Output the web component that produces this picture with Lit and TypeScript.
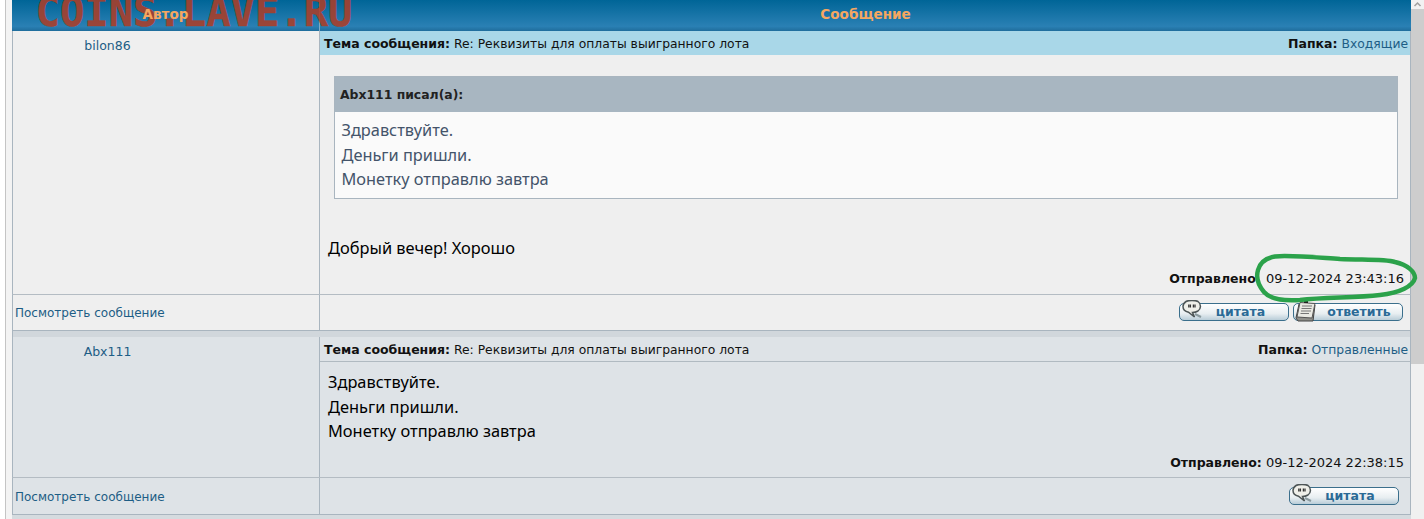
import { LitElement, html, css, svg } from "lit";
import { customElement } from "lit/decorators.js";

const quoteIcon = svg`<svg class="ic" viewBox="0 0 24 20" width="24" height="20">
<path d="M6 1.500 C9 0 15 0 18 1.500 C21.500 4 21 9 18 11 C16 12.200 14 12.500 12.500 12.500 L14.500 17 L8.500 12.200 C5 11.500 3 9.500 3 6.500 C3 4.500 4 2.800 6 1.500Z" fill="#efefe9" stroke="#4d5556" stroke-width="1.500"/>
<path d="M8.800 4.500v3M10.400 4.500v3M13.400 4.500v3M15 4.500v3" stroke="#333" stroke-width="1.300"/>
<path d="M15 14 L21 17" stroke="#8a9a9e" stroke-width="2"/></svg>`;
const replyIcon = svg`<svg class="ic" viewBox="0 0 24 22" width="24" height="22">
<path d="M2 18 L5 4 L21 5 L19 21 L4 21Z" fill="#8f8f8a" stroke="#444" stroke-width="1"/>
<path d="M6 2.500 L21 3.500 L18 18 L3 17Z" fill="#e9e9e3" stroke="#555" stroke-width="1"/>
<path d="M8 6 H18 M7.500 8.500 H17.500 M7 11 H17 M6.500 13.500 H15" stroke="#777" stroke-width="1.100"/>
<rect x="10" y="0" width="4" height="3" fill="#222"/></svg>`;

@customElement("app-root")
export class AppRoot extends LitElement {
  static styles = css`
    :host { display: block; width: 1424px; height: 519px; overflow: hidden; position: relative; background: #fff;
      font-family: "DejaVu Sans", sans-serif; font-size: 12px; color: #111; }
    .page { display: flex; height: 519px; }
    .gutter { width: 6px; flex: none; background: #fff; border-right: 1px solid #c4c4c4; box-sizing: border-box; }
    .gutter2 { width: 6px; flex: none; background: #f3f3f3; }
    .table { width: 1399px; flex: none; background: #d5dbdf; }
    .scroll { width: 13px; flex: none; background: #f0f0f0; display: flex; flex-direction: column; }
    .arrow { height: 9px; background: #f2f2f2; display: block; }
    .thumb { height: 355px; background: #cdcdcd; }
    .head { height: 31px; display: grid; grid-template-columns: 308px 1fr; background: linear-gradient(#006597, #2a80b4 85%, #1f6d9c);
      font-weight: bold; font-size: 13.600px; color: #f5a761; text-align: center; line-height: 28px; }
    .head div:first-child { border-right: 1px solid #7fa9c4; }
    .head span { position: relative; z-index: 2; }
    .row { display: grid; grid-template-columns: 307px 1fr; border-left: 1px solid #a9b5bf; border-right: 1px solid #a9b5bf; }
    .r1 { background: #efefef; height: 263px; }
    .r2 { background: #dee3e7; height: 140px; }
    .foot { display: grid; grid-template-columns: 307px 1fr; border-left: 1px solid #a9b5bf; border-right: 1px solid #a9b5bf; border-top: 1px solid #b4bcc3; border-bottom: 1px solid #a9b5bf; box-sizing: border-box; }
    .f1 { background: #efefef; height: 37px; }
    .f2 { background: #dee3e7; height: 38px; }
    .author { border-right: 1px solid #a9b5bf; color: #1d5d85; font-size: 12.500px; padding: 7px 117px 0 0; box-sizing: border-box; text-align: center; }
    .main { display: flex; flex-direction: column; min-width: 0; }
    .subj { height: 24px; display: flex; justify-content: space-between; align-items: center; padding: 1px 2px 0 4px; font-size: 12.350px; line-height: 23px; box-sizing: border-box; flex: none; }
    .s1 { background: #a9d7e8; }
    .s2 { border-bottom: 1px solid #b0bac1; height: 25px; }
    b { font-weight: bold; color: #111; font-size: 12.500px; }
    a { color: #1d5d85; }
    .quote { margin: 21px 12px 0 14px; border: 1px solid #a9b5bf; flex: none; }
    .qh { height: 35px; background: #a8b6c1; font-weight: bold; font-size: 12.400px; color: #222; line-height: 35px; padding-left: 5px; }
    .qb { background: #fafafa; padding: 6px 6px 0 6.500px; height: 86px; box-sizing: border-box; font-family: "Noto Sans", sans-serif; font-size: 16.350px; line-height: 24.500px; color: #44546a; }
    .msg { font-family: "Noto Sans", sans-serif; font-size: 16.400px; line-height: 24.500px; color: #000; padding: 0 0 0 8px; }
    .m1 { margin-top: 37px; }
    .m2 { padding-top: 8px; }
    .sent { margin-top: auto; text-align: right; padding: 0 6px 7px 0; font-size: 13px; line-height: 16px; }
    .sent .nc { margin-right: 6px; }
    .r2 .sent { padding-bottom: 6px; }
    .view { border-right: 1px solid #a9b5bf; padding: 11px 0 0 2px; color: #1d5d85; font-size: 12px; box-sizing: border-box; }
    .f2 .view { padding-top: 12px; }
    .acts { display: flex; justify-content: flex-end; gap: 4px; padding: 8px 7px 0 0; }
    .f2 .acts { padding: 9px 11px 0 0; }
    .btn { position: relative; height: 18px; width: 110px; box-sizing: border-box; border: 1.500px solid #3b6f8c; border-radius: 5px; background: linear-gradient(#fff, #e8eef1 60%, #b9cdd8);
      font-size: 12.500px; font-weight: bold; color: #2a6a96; line-height: 15px; text-align: center; padding-left: 13px; }
    .f2 .btn { padding-left: 12px; }
    .b2 { padding-left: 22px; }
    .ic { position: absolute; left: 0; top: -4px; }
    .gap { height: 6px; background: #d1d7dc; border-left: 1px solid #a9b5bf; border-right: 1px solid #a9b5bf; }
    .mark { position: absolute; z-index: 1; left: 35.500px; top: -11px; font-family: "DejaVu Sans Mono", monospace; font-weight: bold; font-size: 40.500px; line-height: 46px; color: rgba(172, 62, 40, .88); -webkit-text-stroke: .5px rgba(172, 62, 40, .88); white-space: nowrap; pointer-events: none; }
    .ring { position: absolute; left: 1250px; top: 250px; pointer-events: none; }
  `;
  render() {
    return html`<div class="page">
      <div class="gutter"></div><div class="gutter2"></div>
      <div class="table">
        <div class="head"><div><span>Автор</span></div><div>Сообщение</div></div>
        <div class="row r1">
          <div class="author">bilon86</div>
          <div class="main">
            <div class="subj s1"><span><b>Тема сообщения:</b> Re: Реквизиты для оплаты выигранного лота</span><span><b>Папка:</b> <a>Входящие</a></span></div>
            <div class="quote"><div class="qh">Abx111 писал(а):</div><div class="qb">Здравствуйте.<br>Деньги пришли.<br>Монетку отправлю завтра</div></div>
            <div class="msg m1">Добрый вечер! Хорошо</div>
            <div class="sent"><b class="nc">Отправлено</b> 09-12-2024 23:43:16</div>
          </div>
        </div>
        <div class="foot f1"><div class="view">Посмотреть сообщение</div><div class="acts"><div class="btn">${quoteIcon}цитата</div><div class="btn b2">${replyIcon}ответить</div></div></div>
        <div class="gap"></div>
        <div class="row r2">
          <div class="author">Abx111</div>
          <div class="main">
            <div class="subj s2"><span><b>Тема сообщения:</b> Re: Реквизиты для оплаты выигранного лота</span><span><b>Папка:</b> <a>Отправленные</a></span></div>
            <div class="msg m2">Здравствуйте.<br>Деньги пришли.<br>Монетку отправлю завтра</div>
            <div class="sent"><b>Отправлено:</b> 09-12-2024 22:38:15</div>
          </div>
        </div>
        <div class="foot f2"><div class="view">Посмотреть сообщение</div><div class="acts"><div class="btn">${quoteIcon}цитата</div></div></div>
      </div>
      <div class="scroll"><svg class="arrow" width="13" height="9" viewBox="0 0 13 9"><path d="M3.500 6 L6.500 3 L9.500 6" fill="none" stroke="#a0a0a0" stroke-width="1.500"/></svg><div class="thumb"></div></div>
    </div>
    <div class="mark">COINS.LAVE.RU</div>
    <svg class="ring" width="174" height="56" viewBox="0 0 174 56"><path d="M25 6.500 C38 5 60 7 90 9 C115 10 135 9 145 12 C158 15 165 22 165 28 C163 36 150 43 130 45 C105 48 75 47 50 50 C35 51 20 49 14 42 C8 35 6 27 8 20 C10 13 16 8 25 6.500Z" fill="none" stroke="#2ba24a" stroke-width="4.500"/></svg>`;
  }
}
